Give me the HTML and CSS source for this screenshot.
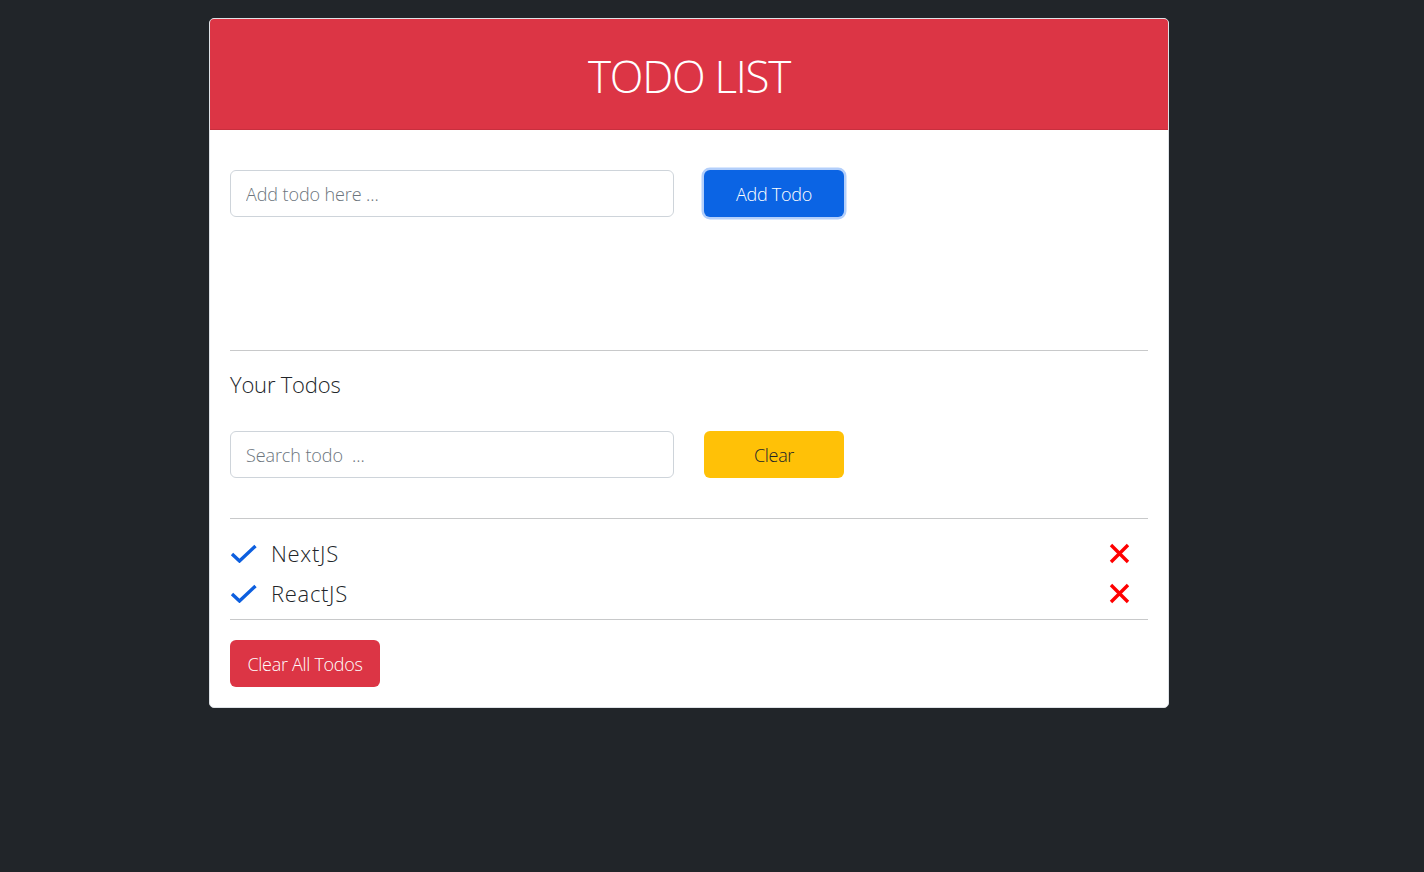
FILE: index.html
```html
<!DOCTYPE html>
<html>
<head>
<meta charset="utf-8">
<link rel="stylesheet" href="styles.css">
</head>
<body>
<div class="page">
  <div class="card">
    <div class="card-header"><h1 class="title">TODO LIST</h1></div>
    <div class="card-body">
      <div class="form-row add-row">
        <input class="field" type="text" placeholder="Add todo here ...">
        <button class="btn btn-primary focused">Add Todo</button>
      </div>
      <hr class="rule rule-big">
      <h4 class="subtitle">Your Todos</h4>
      <div class="form-row">
        <input class="field" type="text" placeholder="Search todo &nbsp;...">
        <button class="btn btn-warning">Clear</button>
      </div>
      <hr class="rule rule-list">
      <ul class="todos">
        <li class="todo">
          <svg class="check" width="27" height="19" viewBox="0 0 27 19"><path d="M2 10 L9.5 17 L25.5 2" fill="none" stroke="#0d5fdf" stroke-width="3.4"/></svg>
          <span class="todo-text">NextJS</span>
          <svg class="del" width="21" height="21" viewBox="0 0 21 21"><path d="M2 2 L19 19 M19 2 L2 19" stroke="#f00" stroke-width="3.4"/></svg>
        </li>
        <li class="todo">
          <svg class="check" width="27" height="19" viewBox="0 0 27 19"><path d="M2 10 L9.5 17 L25.5 2" fill="none" stroke="#0d5fdf" stroke-width="3.4"/></svg>
          <span class="todo-text">ReactJS</span>
          <svg class="del" width="21" height="21" viewBox="0 0 21 21"><path d="M2 2 L19 19 M19 2 L2 19" stroke="#f00" stroke-width="3.4"/></svg>
        </li>
      </ul>
      <hr class="rule rule-end">
      <button class="btn btn-danger">Clear All Todos</button>
    </div>
  </div>
</div>
</body>
</html>
```
FILE: styles.css
```css
html, body {
  margin: 0;
  padding: 0;
  background: #212529;
  height: 100%;
}
body {
  font-family: "Open Sans", "DejaVu Sans", sans-serif;
  font-weight: 300;
  color: #212529;
}
.page {
  padding: 18px 0 0 209px;
}
.card {
  width: 958px;
  background: #fff;
  border: 1px solid #dee2e6;
  border-radius: 5px;
  overflow: hidden;
}
.card-header {
  background: #dc3545;
  border-bottom: 1px solid #c82f3e;
  padding: 30px 0 25px;
  text-align: center;
}
.title {
  margin: 0;
  font-size: 44px;
  font-weight: 300;
  line-height: 55px;
  letter-spacing: -1.3px;
  color: #fff;
}
.card-body {
  padding: 40px 20px 20px;
}
.form-row {
  display: flex;
  gap: 30px;
  align-items: center;
}
.field {
  width: 444px;
  box-sizing: border-box;
  height: 47px;
  padding: 0 15px;
  font-family: inherit;
  font-weight: 300;
  font-size: 18px;
  letter-spacing: -0.1px;
  border: 1px solid #ced4da;
  border-radius: 6px;
  color: #212529;
  outline: none;
}
.field::placeholder {
  color: #6c757d;
}
.btn {
  box-sizing: border-box;
  height: 47px;
  width: 140px;
  border: 1px solid transparent;
  border-radius: 6px;
  font-family: inherit;
  font-weight: 300;
  font-size: 18px;
  letter-spacing: -0.3px;
  padding: 0 12px;
  white-space: nowrap;
  cursor: pointer;
}
.btn-primary {
  background: #0b64e4;
  color: #fff;
}
.focused {
  box-shadow: 0 0 0 2.5px #b3cffb;
}
.btn-warning {
  background: #ffc107;
  color: #212529;
}
.btn-danger {
  background: #dc3545;
  color: #fff;
  width: 150px;
}
.rule {
  border: 0;
  border-top: 1px solid #c8c9ca;
  margin: 0;
}
.rule-big {
  margin-top: 133px;
  margin-bottom: 18px;
}
.subtitle {
  margin: 0 0 31px;
  font-size: 22px;
  font-weight: 300;
  line-height: 31px;
  letter-spacing: -0.2px;
}
.rule-list {
  margin-top: 40px;
  margin-bottom: 14px;
}
.todos {
  list-style: none;
  margin: 0;
  padding: 0;
}
.todo {
  display: flex;
  align-items: center;
  height: 40px;
}
.check {
  margin-left: 0;
  flex: none;
}
.todo-text {
  margin-left: 14px;
  font-size: 22px;
  letter-spacing: 0.7px;
  flex: 1;
}
.del {
  margin-right: 18px;
  flex: none;
}
.rule-end {
  margin-top: 6px;
  margin-bottom: 20px;
}
```
